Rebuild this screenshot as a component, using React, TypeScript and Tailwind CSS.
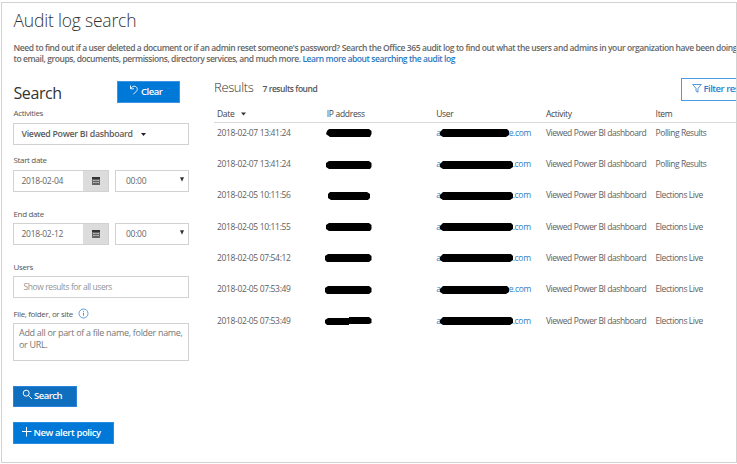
import type { ReactNode } from "react";

const rows = [
  { date: "2018-02-07 13:41:24", item: "Polling Results", ip: 0, tail: "e.com" },
  { date: "2018-02-07 13:41:24", item: "Polling Results", ip: 1, tail: ".com" },
  { date: "2018-02-05 10:11:56", item: "Elections Live", ip: 2, tail: ".com" },
  { date: "2018-02-05 10:11:55", item: "Elections Live", ip: 1, tail: ".com" },
  { date: "2018-02-05 07:54:12", item: "Elections Live", ip: 3, tail: ".com" },
  { date: "2018-02-05 07:53:49", item: "Elections Live", ip: 3, tail: "e.com" },
  { date: "2018-02-05 07:53:49", item: "Elections Live", ip: 4, tail: ".com" },
];

const ipMarks = [
  "M0 2 2 0H42L44.5 2V5L43 8H3L-1 5Z",
  "M-1 2 2 0H42L44.5 2V6L43 8H2L-1 6Z",
  "M1 2 3 0H40L43 2V6L41 8H4L1 6Z",
  "M-2 2 1 0H42L44.5 2V6L42 8H0L-2 6Z",
  "M-2 3 1 1H22V0H42L44.5 2V6L42 7H22V8H0L-2 6Z",
];

function Label({ children }: { children: ReactNode }) {
  return (
    <div className="flex h-[12px] items-center pt-px pl-[0.5px] text-[8px] tracking-[-0.34px] whitespace-nowrap text-[#555]">{children}</div>
  );
}

function CalendarIcon() {
  return (
    <svg width="8" height="8" viewBox="0 0 8 8">
      <path d="M0 0h8v8H0z" fill="#666" />
      <path d="M0 0h8v2H0z" fill="#333" />
      <path d="M1 3.5h6M1 5.5h6" stroke="#c4c4c4" strokeWidth="0.9" />
      <path d="M3 2.5v5M5 2.5v5" stroke="#555" strokeWidth="0.4" />
    </svg>
  );
}

function DateRow({ date }: { date: string }) {
  return (
    <div className="flex h-[22px] w-[176px] justify-between text-[8.5px] tracking-[-0.28px] text-[#666]">
      <div className="flex w-[96px] border border-[#d2d2d2]">
        <div className="flex flex-1 items-center pt-px pl-[7.5px]">{date}</div>
        <div className="flex w-[25px] items-center justify-center bg-[#dcdcdc]">
          <CalendarIcon />
        </div>
      </div>
      <div className="flex w-[74px] items-center justify-between border border-[#d2d2d2] pr-[4px] pl-[10px]">
        <span className="pt-px">00:00</span>
        <svg className="-mt-[2px]" width="4" height="5" viewBox="0 0 4 5">
          <path d="M0 0.3h4L2 4.7z" fill="#333" />
        </svg>
      </div>
    </div>
  );
}

function SearchPanel() {
  return (
    <div className="w-[176px] shrink-0">
      <div className="flex h-[25px] items-start justify-between pr-[9px]">
        <h2 className="pt-[3px] pl-[0.5px] text-[16px] leading-[20px] tracking-[-0.4px] text-[#333]">Search</h2>
        <button className="mt-px flex h-[22px] w-[63px] items-center border border-[#3b94e4] bg-[#0078d7] pt-px pl-[12px] text-[9.5px] font-semibold tracking-[-0.5px] text-white">
          <svg className="mr-[3px] -mt-[4px]" width="8" height="10" viewBox="0 0 8 10" fill="none" stroke="white" strokeWidth="0.9">
            <path d="M0.5 0.5v3.3h3.5M0.7 3.6C2 1.5 3.6 1 5 1.3c2.3.6 3 3.2 1.5 4.8L3.3 9.3" />
          </svg>
          Clear
        </button>
      </div>
      <div className="mt-[2px]"><Label>Activities</Label></div>
      <div className="mt-[4px] flex h-[22px] items-center border border-[#d2d2d2] pt-px pl-[7.5px] text-[8.8px] font-semibold tracking-[-0.29px] text-[#5c5c5c]">
        Viewed Power BI dashboard
        <svg className="ml-[8px]" width="5" height="3" viewBox="0 0 5 3">
          <path d="M0 0h5L2.5 3z" fill="#222" />
        </svg>
      </div>
      <div className="mt-[9px]"><Label>Start date</Label></div>
      <div className="mt-[4px]"><DateRow date="2018-02-04" /></div>
      <div className="mt-[16px]"><Label>End date</Label></div>
      <div className="mt-[3px]"><DateRow date="2018-02-12" /></div>
      <div className="mt-[16px]"><Label>Users</Label></div>
      <div className="mt-[3px] flex h-[22px] items-center border border-[#d2d2d2] pt-px pl-[9.5px] text-[8.5px] tracking-[-0.41px] text-[#949494]">
        Show results for all users
      </div>
      <div className="mt-[10px]">
        <Label>
          File, folder, or site
          <svg className="mb-px ml-[5px] shrink-0" width="11" height="11" viewBox="0 0 11 11" fill="none" stroke="#3a86d0">
            <circle cx="5.5" cy="5.5" r="4.5" strokeWidth="0.8" />
            <path d="M5.5 4.7v3M5.5 2.8v1" strokeWidth="0.9" />
          </svg>
        </Label>
      </div>
      <div className="mt-[3px] h-[38px] border border-[#d2d2d2] pt-[3px] pl-[5px] text-[9px] leading-[12.5px] tracking-[-0.31px] text-[#777]">
        Add all or part of a file name, folder name,
        <br />
        or URL.
      </div>
      <button className="mt-[25px] flex h-[21px] w-[64px] items-center border border-[#2a83dd] bg-[#106ebe] pl-[8px] text-[9.5px] font-semibold tracking-[-0.5px] text-white">
        <svg className="mr-[1px] -mt-[3px]" width="11" height="11" viewBox="0 0 11 11" fill="none" stroke="white" strokeWidth="1">
          <circle cx="4.2" cy="4.2" r="3" />
          <path d="M6.4 6.4 10 10" />
        </svg>
        Search
      </button>
      <button className="mt-[15px] flex h-[22px] w-[101px] items-center border border-[#2a8ce0] bg-[#0078d7] pt-px pl-[8px] text-[9.5px] font-semibold tracking-[-0.42px] text-white">
        <svg className="mr-[1.5px] -mt-[2px]" width="10" height="10" viewBox="0 0 10 10" stroke="white" strokeWidth="1">
          <path d="M4.5 0v9.5M0 4.5h9.5" />
        </svg>
        New alert policy
      </button>
    </div>
  );
}

const grid = "grid grid-cols-[109.7px_109.5px_109.7px_109.7px_80px] pl-[3px]";

function Results() {
  return (
    <div className="ml-[25px] w-[523px] shrink-0">
      <div className="flex h-[25px] justify-between">
        <div className="flex items-baseline text-[#333]">
          <h2 className="text-[13px] leading-[15px] font-light tracking-[-0.35px]">Results</h2>
          <span className="ml-[9px] text-[8.5px] font-semibold tracking-[-0.45px] text-[#555]">7 results found</span>
        </div>
        <button className="-mt-[2px] mr-[-20px] flex h-[23px] w-[76px] shrink-0 items-center border border-[#4b9ae3] pl-[10px] text-[9.5px] font-semibold tracking-[-0.5px] whitespace-nowrap text-[#2b7fd0]">
          <svg className="mr-[1.5px] -mt-[2px] shrink-0" width="10" height="9" viewBox="0 0 10 9" fill="none" stroke="#2b7fd0" strokeWidth="0.8">
            <path d="M0.7 0.5h8.6L6 4.3v4L4 7V4.3z" />
          </svg>
          Filter results
        </button>
      </div>
      <div className={grid + " h-[18px] items-center border-b border-[#d9d9d9] pt-[2px] text-[8.5px] tracking-[-0.3px] text-[#444]"}>
        <div className="flex items-center">
          Date
          <svg className="mb-px ml-[6px]" width="5" height="4" viewBox="0 0 5 4">
            <path d="M0 0.5h5L2.5 3.5z" fill="#333" />
          </svg>
        </div>
        <div>IP address</div>
        <div>User</div>
        <div>Activity</div>
        <div>Item</div>
      </div>
      <div className="-mt-[5px]">
        {rows.map((r, i) => (
          <div key={i} className={grid + " h-[31.3px] items-center text-[8.5px] tracking-[-0.42px] whitespace-nowrap text-[#606060]"}>
            <div className="tracking-[-0.35px]">{r.date}</div>
            <div>
              <svg className="overflow-visible" width="45" height="8" viewBox="0 0 45 8">
                <path d={ipMarks[r.ip]} fill="#000" />
              </svg>
            </div>
            <div className="flex items-center tracking-[-0.3px] text-[#2b80c9]">
              <span>a</span>
              <svg className="-ml-[1px] shrink-0" width={r.tail === "e.com" ? 69 : 73} height="8" viewBox={r.tail === "e.com" ? "0 0 69 8" : "0 0 73 8"}>
                <path d={r.tail === "e.com" ? "M0 3 3 0H67L69 2V6L66 8H3L0 6Z" : "M0 3 3 0H71L73 2V6L70 8H3L0 6Z"} fill="#000" />
              </svg>
              <span>{r.tail}</span>
            </div>
            <div>Viewed Power BI dashboard</div>
            <div>{r.item}</div>
          </div>
        ))}
      </div>
    </div>
  );
}

export default function App() {
  return (
    <div className="h-[464px] w-[737px] overflow-hidden bg-white pt-[2px] pl-px font-['Open_Sans','Noto_Sans',sans-serif]">
      <div className="h-[461px] w-[736px] overflow-hidden border border-[#d2d2d2] pl-[11px]">
        <h1 className="pt-[5px] pl-[0.5px] text-[17.5px] leading-[24px] font-light tracking-[-0.2px] text-[#333]">Audit log search</h1>
        <div className="mt-[10px] pl-[0.5px] text-[8.5px] leading-[11.3px] font-semibold whitespace-nowrap text-[#666]">
          <p className="tracking-[-0.405px]">
            Need to find out if a user deleted a document or if an admin reset someone's password? Search the Office 365 audit log to find out what the users and admins in your organization have been doing
          </p>
          <p className="tracking-[-0.43px]">
            to email, groups, documents, permissions, directory services, and much more.{" "}
            <a className="text-[#2b78be]">Learn more about searching the audit log</a>
          </p>
        </div>
        <div className="mt-[15px] flex">
          <SearchPanel />
          <Results />
        </div>
      </div>
    </div>
  );
}
